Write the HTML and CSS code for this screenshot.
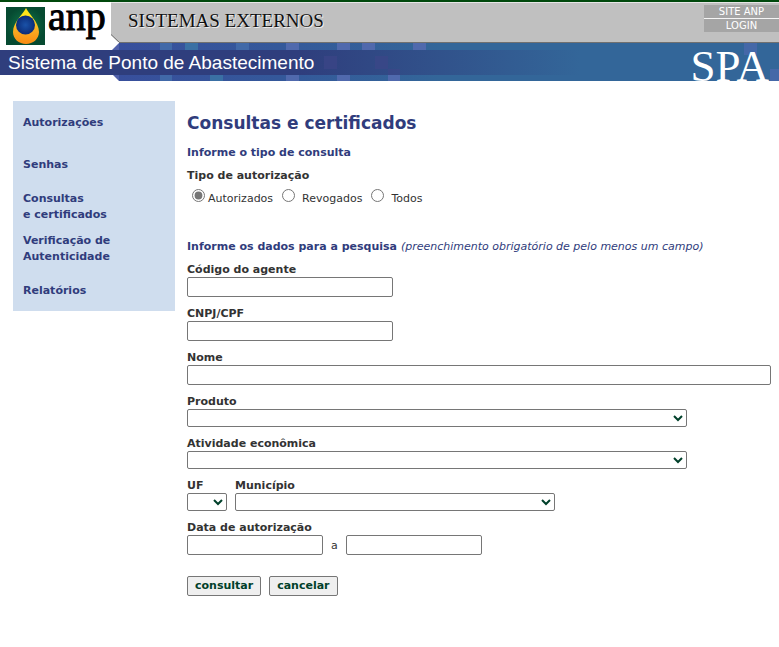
FILE: index.html
```html
<!DOCTYPE html>
<html lang="pt-BR">
<head>
<meta charset="utf-8">
<meta name="viewport" content="width=device-width, initial-scale=1">
<title>Sistema de Ponto de Abastecimento</title>
<link rel="stylesheet" href="styles.css">
</head>
<body>
<header class="header">
  <svg class="backdrop" aria-hidden="true">
    <defs>
      <linearGradient id="sky" gradientUnits="userSpaceOnUse" x1="119" y1="0" x2="440" y2="0">
        <stop offset="0" stop-color="#384f9c"/>
        <stop offset="0.5" stop-color="#34589a"/>
        <stop offset="1" stop-color="#336699"/>
      </linearGradient>
      <linearGradient id="band" gradientUnits="userSpaceOnUse" x1="300" y1="0" x2="580" y2="0">
        <stop offset="0" stop-color="#2f3e7d"/>
        <stop offset="1" stop-color="#336699"/>
      </linearGradient>
    </defs>
    <rect width="100%" height="2" fill="#00480c"/>
    <rect x="111" y="2" width="100%" height="1" fill="#e6e6e6"/>
    <rect x="111" y="3" width="100%" height="39" fill="#c0c0c0"/>
    <rect x="119" y="42" width="100%" height="1" fill="#707070"/>
    <path d="M110 34 L119 43 L110 43 Z" fill="#fff"/>
    <path d="M111 34.500L119.500 42.500" stroke="#707070" fill="none"/>
    <rect x="119" y="43" width="100%" height="38" fill="url(#sky)"/>
    <path d="M119 43V50H112Z" fill="#5060aa"/>
    <path d="M113 75H119V81Z" fill="#5060aa"/>
    <g fill="#4169a8">
      <rect x="160" y="43" width="12" height="38"/>
      <rect x="236" y="43" width="13" height="7"/>
    </g>
    <g fill="#3a70a4">
      <rect x="185" y="43" width="13" height="7"/>
      <rect x="210" y="75" width="13" height="6"/>
    </g>
    <g fill="#5069ad">
      <rect x="286" y="43" width="13" height="38"/>
      <rect x="337" y="43" width="13" height="38"/>
      <rect x="362" y="43" width="13" height="7"/>
      <rect x="413" y="43" width="13" height="7"/>
      <rect x="388" y="75" width="12" height="6"/>
    </g>
    <g fill="#4568a8">
      <rect x="744" y="43" width="13" height="12"/>
      <rect x="770" y="69" width="13" height="12"/>
    </g>
    <rect y="50" width="300" height="25" fill="#2f3e7d"/>
    <rect x="300" y="50" width="280" height="25" fill="url(#band)"/>
    <g fill="#3e4689" opacity="0.6">
      <rect x="324" y="56" width="13" height="13"/>
      <rect x="375" y="56" width="13" height="13"/>
      <rect x="388" y="69" width="12" height="6"/>
    </g>
  </svg>
  <div class="top">
    <div class="brand">
      <svg width="39" height="38" viewBox="0 0 39 38" aria-hidden="true">
        <defs>
          <radialGradient id="green"><stop offset="0" stop-color="#117a4c"/><stop offset="1" stop-color="#064a31"/></radialGradient>
          <linearGradient id="drop" x1="0" y1="0" x2="0" y2="1"><stop offset="0.200" stop-color="#ffe51a"/><stop offset="0.600" stop-color="#f9ae22"/><stop offset="1" stop-color="#fa8a12"/></linearGradient>
          <radialGradient id="globe"><stop offset="0" stop-color="#1a52a8"/><stop offset="1" stop-color="#0b2c78"/></radialGradient>
        </defs>
        <rect width="39" height="38" fill="url(#green)"/>
        <path d="M20 1C18 6 7 15 7 25C7 32 13 37 20 37S33 32 33 25C33 15 22 6 20 1Z" fill="url(#drop)"/>
        <circle cx="19.500" cy="18" r="9.500" fill="url(#globe)"/>
      </svg>
      <span class="name">anp</span>
    </div>
    <div class="suite">SISTEMAS EXTERNOS</div>
    <nav class="quick"><a href="#">SITE ANP</a><a href="#">LOGIN</a></nav>
  </div>
  <div class="system">
    <div class="system-name">Sistema de Ponto de Abastecimento</div>
    <div class="acronym">SPA</div>
  </div>
</header>
<div class="page">
  <nav class="menu">
    <a href="#">Autorizações</a>
    <a href="#">Senhas</a>
    <a href="#">Consultas<br>e certificados</a>
    <a href="#">Verificação de<br>Autenticidade</a>
    <a href="#">Relatórios</a>
  </nav>
  <main class="content">
    <h1>Consultas e certificados</h1>
    <form>
      <h2>Informe o tipo de consulta</h2>
      <fieldset>
        <legend>Tipo de autorização</legend>
        <div class="radios">
          <input type="radio" name="tipo" id="t1" checked><label for="t1">Autorizados</label>
          <input type="radio" name="tipo" id="t2"><label class="spaced" for="t2">Revogados</label>
          <input type="radio" name="tipo" id="t3"><label class="spaced" for="t3">Todos</label>
        </div>
      </fieldset>
      <h2>Informe os dados para a pesquisa <em>(preenchimento obrigatório de pelo menos um campo)</em></h2>
      <div class="fields">
        <div class="field"><label for="codigo">Código do agente</label><input class="medium" type="text" id="codigo"></div>
        <div class="field"><label for="cnpj">CNPJ/CPF</label><input class="medium" type="text" id="cnpj"></div>
        <div class="field"><label for="nome">Nome</label><input type="text" id="nome"></div>
        <div class="field"><label for="produto">Produto</label><select class="long" id="produto"><option></option></select></div>
        <div class="field"><label for="atividade">Atividade econômica</label><select class="long" id="atividade"><option></option></select></div>
        <div class="row">
          <div class="field"><label for="uf">UF</label><select class="uf" id="uf"><option></option></select></div>
          <div class="field"><label for="municipio">Município</label><select class="city" id="municipio"><option></option></select></div>
        </div>
        <div class="field">
          <label for="inicio">Data de autorização</label>
          <div class="row range"><input class="date" type="text" id="inicio"><label class="until" for="fim">a</label><input class="date" type="text" id="fim"></div>
        </div>
      </div>
      <div class="row actions"><button type="submit">consultar</button><button type="reset">cancelar</button></div>
    </form>
  </main>
</div>
</body>
</html>
```
FILE: styles.css
```css
* { box-sizing: border-box; }
body {
  margin: 0;
  background: #fff;
  color: #333;
  font: 11px/16px Verdana, "DejaVu Sans", sans-serif;
}
a { color: inherit; text-decoration: none; }

.header { position: relative; }
.backdrop {
  position: absolute;
  inset: 0;
  width: 100%;
  height: 100%;
  z-index: -1;
}
.top {
  display: flex;
  align-items: flex-start;
  height: 43px;
}
.brand {
  display: flex;
  align-items: flex-start;
  width: 128px;
  padding-left: 6px;
  gap: 3px;
}
.brand svg { flex: none; margin-top: 7px; }
.name {
  color: #000;
  font: 40px/34px "Liberation Serif", serif;
  -webkit-text-stroke: 1px #000;
}
.suite {
  flex: 1;
  color: #111;
  font: 19px/42px "Liberation Serif", serif;
  text-shadow: 1px 1px 0 #eee;
}
.quick {
  display: grid;
  gap: 1px;
  width: 75px;
  margin-top: 5px;
  background: #f4f4f4;
  color: #fff;
  font-size: 10px;
  line-height: 13px;
  text-align: center;
}
.quick a { background: #a5a5a5; }
.system {
  display: flex;
  justify-content: space-between;
  height: 38px;
  padding: 0 10px 0 8px;
  overflow: hidden;
  color: #fff;
}
.system-name { font: 19px/39px "Liberation Sans", sans-serif; }
.acronym { font: 45px/46px "Liberation Serif", serif; }

.page {
  display: flex;
  align-items: flex-start;
  gap: 12px;
  padding: 20px 8px 20px 13px;
}
.menu {
  flex: none;
  width: 162px;
  background: #cfddee;
  color: #303c7c;
  font-weight: bold;
}
.menu a {
  display: flex;
  align-items: center;
  height: 42px;
  padding: 1px 0 0 10px;
}
.content {
  flex: 1;
  min-width: 0;
  padding-top: 10px;
}
h1, h2 { margin: 0; color: #303c7c; }
h1 {
  margin-bottom: 10px;
  font-size: 17px;
  line-height: 24px;
}
h2 {
  margin-bottom: 7px;
  font-size: 11px;
  line-height: 16px;
}
em { font-weight: normal; }
fieldset {
  min-width: 0;
  margin: 0 0 32px;
  padding: 0;
  border: 0;
}
legend { padding: 0; font-weight: bold; }
.radios {
  display: flex;
  align-items: flex-end;
  height: 23px;
  padding-left: 5px;
}
.radios input {
  width: 13px;
  height: 13px;
  margin: 0 3px 5px 0;
  accent-color: #767676;
}
.radios label { margin-right: 9px; }
.radios .spaced { padding-left: 4px; }

.fields { display: grid; gap: 9px; }
.field { display: grid; justify-items: start; }
.field label { font-weight: bold; line-height: 15px; }
.field .until { font-weight: normal; }
.row { display: flex; gap: 8px; }
.range { align-items: center; }
input[type="text"], select {
  width: 100%;
  margin: 0;
  border: 1px solid #767676;
  border-radius: 2px;
  background: #fff;
  color: #00402a;
  font: 11px Verdana, "DejaVu Sans", sans-serif;
}
input[type="text"] { height: 20px; }
select { height: 18px; }
input.medium { width: 206px; }
input.date { width: 136px; }
select.long { width: 500px; }
select.uf { width: 40px; }
select.city { width: 320px; }
.actions { margin-top: 21px; }
button {
  height: 20px;
  padding: 0 7px;
  border: 1px solid #767676;
  border-radius: 2px;
  background: #efefef;
  color: #00402a;
  font: bold 11px/16px Verdana, "DejaVu Sans", sans-serif;
}
```
